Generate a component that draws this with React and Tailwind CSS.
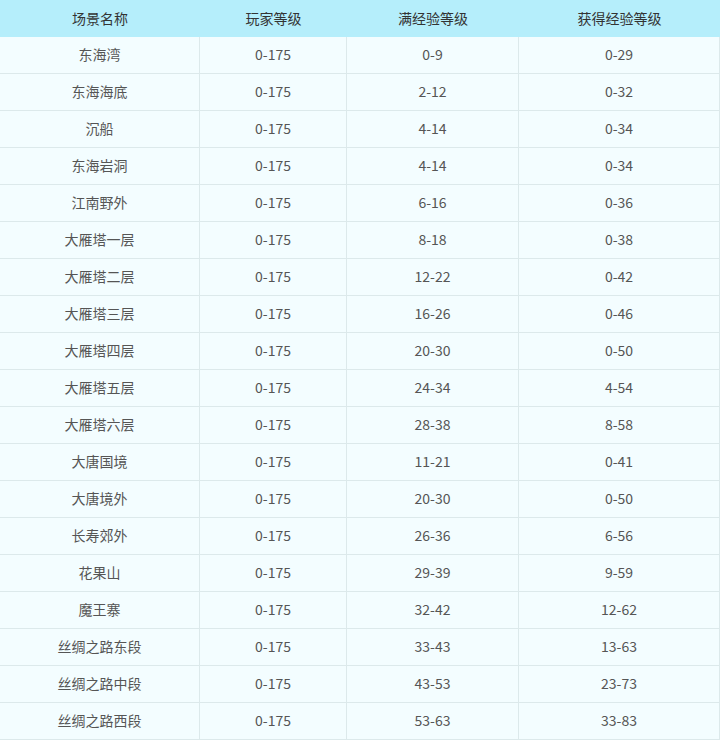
import React from 'react'

const rows = [
  ['东海湾', '0-175', '0-9', '0-29'],
  ['东海海底', '0-175', '2-12', '0-32'],
  ['沉船', '0-175', '4-14', '0-34'],
  ['东海岩洞', '0-175', '4-14', '0-34'],
  ['江南野外', '0-175', '6-16', '0-36'],
  ['大雁塔一层', '0-175', '8-18', '0-38'],
  ['大雁塔二层', '0-175', '12-22', '0-42'],
  ['大雁塔三层', '0-175', '16-26', '0-46'],
  ['大雁塔四层', '0-175', '20-30', '0-50'],
  ['大雁塔五层', '0-175', '24-34', '4-54'],
  ['大雁塔六层', '0-175', '28-38', '8-58'],
  ['大唐国境', '0-175', '11-21', '0-41'],
  ['大唐境外', '0-175', '20-30', '0-50'],
  ['长寿郊外', '0-175', '26-36', '6-56'],
  ['花果山', '0-175', '29-39', '9-59'],
  ['魔王寨', '0-175', '32-42', '12-62'],
  ['丝绸之路东段', '0-175', '33-43', '13-63'],
  ['丝绸之路中段', '0-175', '43-53', '23-73'],
  ['丝绸之路西段', '0-175', '53-63', '33-83'],
]

const head = ['场景名称', '玩家等级', '满经验等级', '获得经验等级']

const App = () => {
  return (
    <div className="w-[720px] bg-white font-['Noto_Sans_CJK_SC','Noto_Sans',sans-serif] text-[14px]">
      <div className="grid grid-cols-[200px_147px_172px_201px] h-[37px] bg-[#b5eefb] text-[#333]">
        {head.map((h) => (
          <div key={h} className="flex items-center justify-center">
            {h}
          </div>
        ))}
      </div>
      {rows.map((r, i) => (
        <div
          key={i}
          className="grid grid-cols-[200px_147px_172px_201px] h-[37px] bg-[#f3fdff] text-[#555] border-b border-[#dce9eb]"
        >
          {r.map((c, j) => (
            <div key={j} className="flex items-center justify-center pb-[2px] border-r border-[#dce9eb]">
              {c}
            </div>
          ))}
        </div>
      ))}
    </div>
  )
}

export default App
